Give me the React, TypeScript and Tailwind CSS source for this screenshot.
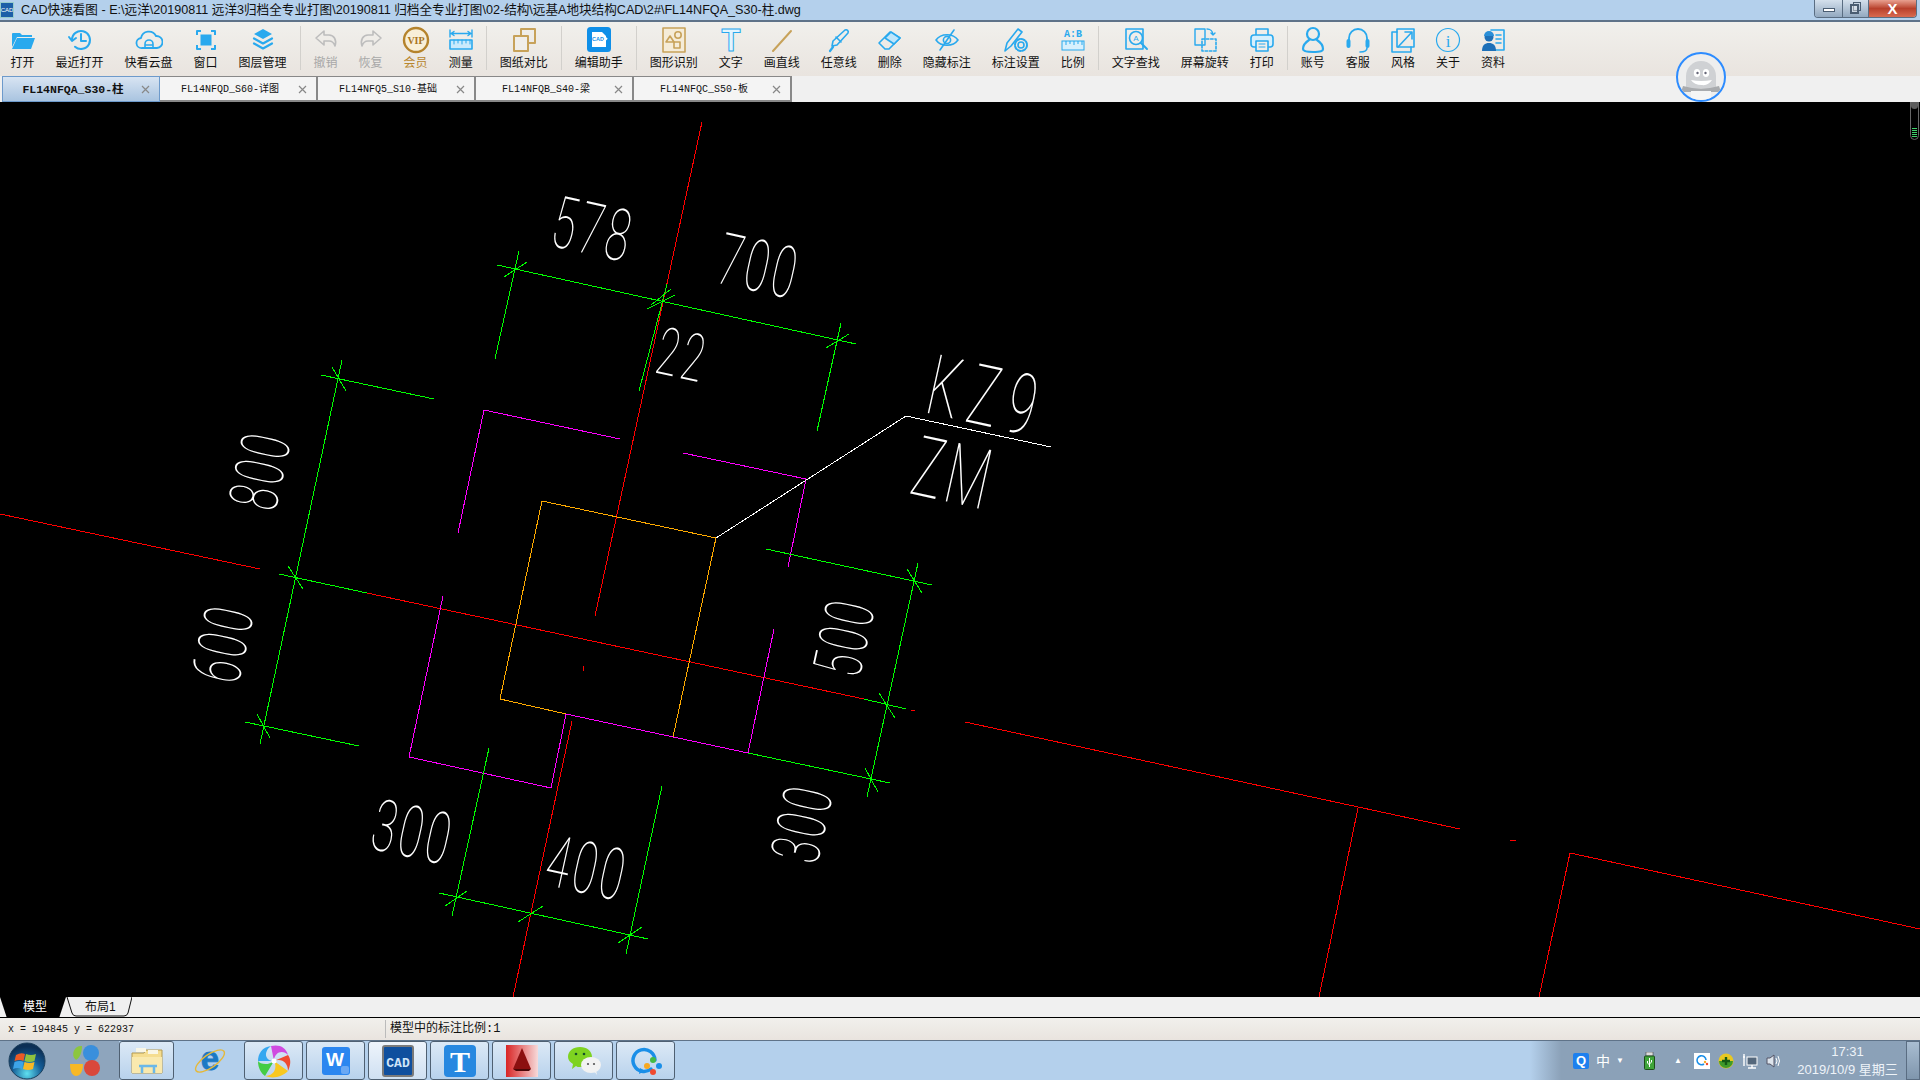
import type { ReactNode } from "react";

const BLUE = "#29a9ee";
const GOLD = "#c7a25a";
const GRAY = "#bdbdbd";

function Ico({ children }: { children: ReactNode }) {
  return (
    <svg width="28" height="28" viewBox="0 0 28 28" fill="none" stroke={BLUE} strokeWidth="1.6" strokeLinejoin="round" strokeLinecap="round">
      {children}
    </svg>
  );
}

const icons: Record<string, ReactNode> = {
  open: (
    <Ico>
      <path d="M3 8a1 1 0 0 1 1-1h7l2 2h10v2H8l-5 10z" fill={BLUE} stroke="none" />
      <path d="M8 12h18l-4 11H3z" fill={BLUE} stroke="none" />
    </Ico>
  ),
  recent: (
    <Ico>
      <path d="M6 14a9 9 0 1 1 3 6.7" strokeWidth="2" />
      <path d="M3 11l3 4 4-3" strokeWidth="2" />
      <path d="M15 8v7h5" strokeWidth="2" />
    </Ico>
  ),
  cloud: (
    <Ico>
      <path d="M7 22a5 5 0 0 1-1-10 8 8 0 0 1 15-2 6 6 0 0 1 1 12z" strokeWidth="1.8" />
      <path d="M10 22v-4a4 4 0 0 1 8 0v4M10 19h8" />
    </Ico>
  ),
  window: (
    <Ico>
      <rect x="8.5" y="8.5" width="11" height="11" fill={BLUE} stroke="none" />
      <path d="M5 9V5h4M19 5h4v4M23 19v4h-4M9 23H5v-4" strokeWidth="2" strokeLinecap="butt" />
    </Ico>
  ),
  layers: (
    <Ico>
      <path d="M14 3l9 5-9 5-9-5z" fill={BLUE} stroke="none" />
      <path d="M5 12.5l9 5 9-5" strokeWidth="2.2" />
      <path d="M5 17.5l9 5 9-5" strokeWidth="2.2" />
    </Ico>
  ),
  undo: (
    <Ico>
      <path d="M12 5L4 12l8 7v-4h5c3 0 5 2 6 5 2-6-1-11-6-11h-5z" stroke={GRAY} />
    </Ico>
  ),
  redo: (
    <Ico>
      <path d="M16 5l8 7-8 7v-4h-5c-3 0-5 2-6 5-2-6 1-11 6-11h5z" stroke={GRAY} />
    </Ico>
  ),
  vip: (
    <svg width="28" height="28" viewBox="0 0 28 28">
      <circle cx="14" cy="14" r="12" fill="#f8efd8" stroke="#b5832c" strokeWidth="2.4" />
      <text x="14" y="17.5" textAnchor="middle" fontSize="10" fontWeight="700" fill="#a87420" className="font-['Liberation_Serif',serif]">
        VIP
      </text>
    </svg>
  ),
  measure: (
    <Ico>
      <path d="M3 4v7M25 4v7M4 7.5h20M7 5.5l-3 2 3 2M21 5.5l3 2-3 2" strokeWidth="1.4" />
      <rect x="3" y="14" width="22" height="9" fill="#c9eafc" />
      <path d="M7 14v4M11 14v3M15 14v4M19 14v3M23 14v4" strokeWidth="1" />
    </Ico>
  ),
  compare: (
    <Ico>
      <rect x="11" y="3" width="14" height="14" stroke={GOLD} strokeWidth="2" />
      <rect x="4" y="10" width="14" height="15" stroke={GOLD} strokeWidth="2" fill="#f0eeea" />
    </Ico>
  ),
  helper: (
    <svg width="28" height="28" viewBox="0 0 28 28">
      <rect x="2" y="1" width="24" height="25" rx="3.5" fill="#0f8fe8" />
      <path d="M7 6h10l4 4v11H7z" fill="#fff" />
      <text x="13" y="15" textAnchor="middle" fontSize="5.5" fontWeight="700" fill="#0f8fe8" className="font-['Liberation_Sans',sans-serif]">
        CAD
      </text>
      <path d="M15 19l7-7" stroke="#fff" strokeWidth="2" />
    </svg>
  ),
  shape: (
    <Ico>
      <rect x="3" y="2" width="22" height="24" fill="#f5ecd8" stroke={GOLD} />
      <path d="M6 16l4-6 4 6z" stroke={GOLD} />
      <circle cx="18" cy="9" r="3.2" stroke={GOLD} />
      <rect x="14" y="16" width="6" height="6" stroke={GOLD} />
    </Ico>
  ),
  text: (
    <svg width="28" height="28" viewBox="0 0 28 28" className="overflow-visible">
      <text x="14" y="25" textAnchor="middle" fontSize="31" fontWeight="700" fill="#e4f5fe" stroke={BLUE} strokeWidth="1" className="font-['Liberation_Sans',sans-serif]">
        T
      </text>
    </svg>
  ),
  line: (
    <Ico>
      <path d="M5 25L23 5" stroke={GOLD} strokeWidth="2" />
    </Ico>
  ),
  pen: (
    <Ico>
      <path d="M7 20l1-5L20 4c2-1 4 1 3 3L12 19z" />
      <path d="M11 11l5 5" fill="none" />
      <path d="M5 25l3-4" strokeWidth="2.2" />
    </Ico>
  ),
  eraser: (
    <Ico>
      <path d="M3 17L14 6l10 6-11 11H9z" />
      <path d="M9 12L15 6l9 6-6 6z" fill="#bfe6fb" />
    </Ico>
  ),
  eye: (
    <Ico>
      <path d="M3 14c5-7 17-7 22 0-5 7-17 7-22 0z" />
      <circle cx="14" cy="14" r="3.6" />
      <path d="M21 4L7 24" />
    </Ico>
  ),
  settings: (
    <Ico>
      <path d="M3 25l2-8L16 3l4 3-11 14z" />
      <circle cx="19" cy="19" r="3" />
      <circle cx="19" cy="19" r="6" strokeDasharray="3 1.7" strokeWidth="2" />
    </Ico>
  ),
  scale: (
    <svg width="28" height="28" viewBox="0 0 28 28">
      <text x="14" y="11" textAnchor="middle" fontSize="10" fontWeight="700" fill={BLUE} className="font-['Liberation_Mono',monospace]">
        A:B
      </text>
      <rect x="3" y="15" width="22" height="9" fill="#d7f0fd" stroke={BLUE} />
      <path d="M7 15v4M11 15v3M15 15v4M19 15v3M23 15v4" stroke={BLUE} />
    </svg>
  ),
  find: (
    <Ico>
      <rect x="4" y="3" width="17" height="20" />
      <circle cx="14" cy="12" r="6.5" fill="#f0eeea" />
      <path d="M19 17l6 6" strokeWidth="2" />
      <text x="14" y="15" textAnchor="middle" fontSize="8" fill={BLUE} stroke="none" className="font-['Liberation_Sans',sans-serif]">
        A
      </text>
    </Ico>
  ),
  rotate: (
    <Ico>
      <rect x="4" y="3" width="10" height="16" strokeWidth="1.4" />
      <rect x="11" y="13" width="14" height="12" strokeDasharray="2.5 1.8" />
      <path d="M16 3c3 0 6 2 6 6M20 7l2 2 2-2" strokeWidth="1.4" />
    </Ico>
  ),
  print: (
    <Ico>
      <path d="M8 9V3h12v6" />
      <rect x="3" y="9" width="22" height="12" rx="3" fill="#d7f0fd" />
      <rect x="8" y="15" width="12" height="10" fill="#f0eeea" />
      <path d="M11 18h6M11 21h6" strokeWidth="1" />
    </Ico>
  ),
  account: (
    <Ico>
      <circle cx="14" cy="8" r="6" strokeWidth="2.2" />
      <path d="M10 14c-3 2-6 5-6 9 0 2 2 3 10 3s10-1 10-3c0-4-3-7-6-9" strokeWidth="2.2" />
    </Ico>
  ),
  service: (
    <Ico>
      <path d="M5 15v-3a9 9 0 0 1 18 0v3" strokeWidth="1.8" />
      <rect x="2.5" y="13" width="4" height="9" rx="2" fill={BLUE} stroke="none" />
      <rect x="21.5" y="13" width="4" height="9" rx="2" fill={BLUE} stroke="none" />
      <path d="M23 22c0 3-3 4-7 4" />
    </Ico>
  ),
  style: (
    <Ico>
      <path d="M8 6H3v20h19v-5" />
      <path d="M8 3h17v18H8z" />
      <path d="M9 21L23 6M16 6h7v7" />
    </Ico>
  ),
  about: (
    <Ico>
      <circle cx="14" cy="14" r="11.5" strokeWidth="1.2" />
      <text x="14" y="21" textAnchor="middle" fontSize="17" fill={BLUE} stroke="none" className="font-['Liberation_Serif',serif]">
        i
      </text>
    </Ico>
  ),
  docs: (
    <Ico>
      <path d="M12 4h13v20H14" strokeWidth="1.6" />
      <path d="M17 9h5M17 13h5M17 17h5" />
      <circle cx="10" cy="11" r="4.5" fill="#1e70b8" stroke="none" />
      <path d="M5 10a5 5 0 0 1 10 0z" fill="#2a8fd8" stroke="none" />
      <path d="M3 25c0-6 3-8 7-8s7 2 7 8z" fill="#1e70b8" stroke="none" />
    </Ico>
  ),
};

type Tool = { icon: string; label: string; tone?: string };

const toolGroups: Tool[][] = [
  [
    { icon: "open", label: "打开" },
    { icon: "recent", label: "最近打开" },
    { icon: "cloud", label: "快看云盘" },
    { icon: "window", label: "窗口" },
    { icon: "layers", label: "图层管理" },
  ],
  [
    { icon: "undo", label: "撤销", tone: "text-[#a8a8a8]" },
    { icon: "redo", label: "恢复", tone: "text-[#a8a8a8]" },
    { icon: "vip", label: "会员", tone: "text-[#b8862e]" },
    { icon: "measure", label: "测量" },
  ],
  [{ icon: "compare", label: "图纸对比" }],
  [{ icon: "helper", label: "编辑助手" }],
  [
    { icon: "shape", label: "图形识别" },
    { icon: "text", label: "文字" },
    { icon: "line", label: "画直线" },
    { icon: "pen", label: "任意线" },
    { icon: "eraser", label: "删除" },
    { icon: "eye", label: "隐藏标注" },
    { icon: "settings", label: "标注设置" },
    { icon: "scale", label: "比例" },
  ],
  [
    { icon: "find", label: "文字查找" },
    { icon: "rotate", label: "屏幕旋转" },
    { icon: "print", label: "打印" },
  ],
  [
    { icon: "account", label: "账号" },
    { icon: "service", label: "客服" },
    { icon: "style", label: "风格" },
    { icon: "about", label: "关于" },
    { icon: "docs", label: "资料" },
  ],
];

const tabs = ["FL14NFQA_S30-柱", "FL14NFQD_S60-详图", "FL14NFQ5_S10-基础", "FL14NFQB_S40-梁", "FL14NFQC_S50-板"];

function TitleBar() {
  return (
    <div className="h-[22px] flex items-start bg-[#b4d0ec] border-b-2 border-[#5f7389]">
      <div className="w-[14px] h-[16px] mt-[2px] bg-[#1d5fa8] border border-[#9cc] flex items-center justify-center overflow-hidden">
        <span className="text-[6px] leading-none text-white">CAD</span>
      </div>
      <span className="ml-[7px] text-[12.6px] leading-[20px] text-[#111] whitespace-nowrap">
        CAD快速看图 - E:\远洋\20190811 远洋3归档全专业打图\20190811 归档全专业打图\02-结构\远基A地块结构CAD\2#\FL14NFQA_S30-柱.dwg
      </span>
      <div className="ml-auto mr-[3px] flex h-[18px] rounded-b-[4px] border border-t-0 border-[#5a6d82] overflow-hidden">
        <div className="w-[28px] bg-gradient-to-b from-[#d4e0ec] to-[#93a9c0] border-r border-[#5a6d82] flex items-center justify-center">
          <div className="w-[12px] h-[4px] mt-[3px] bg-white border border-[#4a5d72]" />
        </div>
        <div className="w-[26px] bg-gradient-to-b from-[#d4e0ec] to-[#93a9c0] border-r border-[#5a6d82] flex items-center justify-center relative">
          <div className="absolute left-[10px] top-[2px] w-[8px] h-[9px] border border-[#4a5d72]" />
          <div className="absolute left-[7px] top-[4px] w-[9px] h-[10px] border-2 border-[#4a5d72] bg-white/40" />
        </div>
        <div className="w-[47px] bg-gradient-to-b from-[#e8a090] via-[#b8402c] to-[#d86a50] flex items-center justify-center">
          <span className="text-[15px] leading-none font-bold text-white font-['Liberation_Sans',sans-serif]">X</span>
        </div>
      </div>
    </div>
  );
}

function Toolbar() {
  return (
    <div className="h-[54px] flex bg-gradient-to-b from-[#f1f0ec] to-[#e9e4df]">
      {toolGroups.map((group, i) => (
        <div key={i} className="flex">
          {i > 0 && <div className="w-px h-[44px] mt-[4px] ml-[3px] mr-[2px] bg-[#d2d0cc]" />}
          {group.map((t) => (
            <div key={t.label} className="flex flex-col items-center px-[10.5px] pt-[4px]">
              {/* icons are a bit wider than two-character labels, the label sets the column width */}
              <div className="w-0 h-[28px] flex items-center justify-center [&>svg]:shrink-0">{icons[t.icon]}</div>
              <span className={`mt-[1px] text-[12px] leading-[16px] whitespace-nowrap ${t.tone ?? "text-[#111]"}`}>{t.label}</span>
            </div>
          ))}
        </div>
      ))}
    </div>
  );
}

function TabBar() {
  return (
    <div className="h-[26px] flex pl-[2px] bg-[#f0f0f0]">
      {tabs.map((name, i) => (
        <div
          key={name}
          className={`w-[158px] h-[26px] pt-[1px] flex items-center justify-center pr-[16px] relative font-['Liberation_Mono','Noto_Sans_CJK_SC',monospace] text-[#111] ${
            i === 0
              ? "text-[11.5px] font-bold bg-gradient-to-b from-[#d8e4f2] to-[#a9c4e0] border border-[#6d9acb]"
              : "text-[10px] bg-[#f4f4f4] border-r-2 border-b-2 border-t border-[#888]"
          }`}
        >
          {name}
          <svg className="absolute right-[9px] top-[8px]" width="9" height="9" viewBox="0 0 9 9" stroke="#888" strokeWidth="1.2">
            <path d="M1 1l7 7M8 1l-7 7" />
          </svg>
        </div>
      ))}
    </div>
  );
}

type Seg = [number, number, number, number];

const greenSegs: Seg[] = [
  [497, 265, 856, 344],
  [519, 251, 495, 359],
  [667, 284, 639, 391],
  [841, 323, 817, 431],
  [527, 262, 504, 277],
  [675, 295, 647, 309],
  [671, 289, 651, 305],
  [849, 334, 826, 348],
  [342, 360, 260, 744],
  [321, 375, 434, 399],
  [245, 722, 359, 746],
  [332, 367, 346, 391],
  [288, 566, 303, 589],
  [257, 714, 270, 738],
  [279, 574, 367, 593],
  [864, 699, 906, 709],
  [766, 549, 932, 585],
  [918, 563, 867, 797],
  [907, 569, 922, 593],
  [879, 693, 895, 718],
  [865, 768, 878, 792],
  [748, 753, 890, 783],
  [439, 893, 648, 939],
  [489, 748, 452, 916],
  [662, 786, 626, 954],
  [467, 891, 445, 906],
  [543, 906, 518, 922],
  [642, 927, 618, 943],
];

const redSegs: Seg[] = [
  [702, 122, 595, 616],
  [572, 721, 513, 997],
  [584, 666, 583, 671],
  [0, 514, 260, 569],
  [367, 593, 864, 699],
  [911, 710, 915, 711],
  [965, 722, 1460, 829],
  [1510, 840, 1516, 841],
  [1570, 853, 1920, 929],
  [1358, 808, 1319, 997],
  [1570, 853, 1539, 997],
];

const magentaSegs: Seg[] = [
  [484, 410, 620, 439],
  [484, 410, 458, 533],
  [683, 453, 806, 479],
  [806, 479, 788, 567],
  [443, 596, 409, 757],
  [409, 757, 551, 788],
  [551, 788, 566, 714],
  [566, 714, 748, 753],
  [748, 753, 774, 629],
];

const orangeSegs: Seg[] = [
  [542, 501, 716, 538],
  [716, 538, 673, 737],
  [542, 501, 500, 699],
  [500, 699, 566, 714],
];

const whiteSegs: Seg[] = [
  [716, 538, 906, 416],
  [906, 416, 1051, 447],
];

const cadLabels: { t: string; x: number; y: number; r: number; size: number; ls?: number }[] = [
  { t: "578", x: 548, y: 245, r: 12.4, size: 72 },
  { t: "700", x: 714, y: 282, r: 12.4, size: 72 },
  { t: "22", x: 653, y: 372, r: 12.4, size: 66 },
  { t: "KZ9", x: 923, y: 412, r: 12.4, size: 84, ls: 16 },
  { t: "ZM", x: 908, y: 493, r: 12.4, size: 84 },
  { t: "800", x: 275, y: 513, r: -77.6, size: 68 },
  { t: "600", x: 238, y: 686, r: -77.6, size: 68 },
  { t: "500", x: 859, y: 680, r: -77.6, size: 68 },
  { t: "300", x: 817, y: 866, r: -77.6, size: 68 },
  { t: "300", x: 368, y: 848, r: 12.4, size: 72 },
  { t: "400", x: 542, y: 884, r: 12.4, size: 72 },
];

function Segs({ items, color }: { items: Seg[]; color: string }) {
  return (
    <g stroke={color} strokeWidth="1">
      {items.map(([x1, y1, x2, y2], i) => (
        <line key={i} x1={x1} y1={y1} x2={x2} y2={y2} />
      ))}
    </g>
  );
}

function Drawing() {
  return (
    <div className="h-[895px] bg-black relative overflow-hidden">
      <svg width="1920" height="895" viewBox="0 102 1920 895" shapeRendering="crispEdges" className="block">
        <Segs items={redSegs} color="#ff0000" />
        <Segs items={orangeSegs} color="#ffaa00" />
        <Segs items={magentaSegs} color="#ff00ff" />
        <Segs items={greenSegs} color="#00ff00" />
        <Segs items={whiteSegs} color="#ffffff" />
        <g fill="#fff" className="font-['Roboto',sans-serif] font-thin">
          {cadLabels.map((l, i) => (
            <text key={i} fontSize={l.size} letterSpacing={l.ls ?? 6} transform={`translate(${l.x} ${l.y}) rotate(${l.r}) scale(0.6 1)`}>
              {l.t}
            </text>
          ))}
        </g>
      </svg>
      <div className="absolute right-[1px] top-[-19px] w-[9px] h-[57px] rounded-full border border-[#666] bg-black flex flex-col justify-end items-center">
        <div className="absolute top-0 left-0 w-full h-[25px] rounded-full bg-[#5c5c5c]" />
        <div className="w-[5px] h-[9px] mb-[2px] bg-[repeating-linear-gradient(#3dd26a_0,#3dd26a_1px,#000_1px,#000_2px)]" />
      </div>
    </div>
  );
}

function ModelTabs() {
  return (
    <div className="h-[21px] flex bg-[#f0f0f0] border-b border-black text-[12px] leading-[20px]">
      <div className="w-[66px] h-[20px] pl-[23px] bg-black text-white [clip-path:polygon(0_0,100%_0,90%_100%,10%_100%)]">模型</div>
      <div className="w-[66px] h-[20px] pl-[19px] relative text-[#111]">
        布局1
        <svg className="absolute inset-0" width="66" height="20" viewBox="0 0 66 20" fill="none" stroke="#111">
          <path d="M1 0l5 16q1 3 4 3h48q3 0 4-3l4-16" />
        </svg>
      </div>
    </div>
  );
}

function StatusBar() {
  return (
    <div className="h-[22px] flex items-center bg-gradient-to-b from-[#f1f0ec] to-[#e9e4df]">
      <div className="w-[385px] pl-[8px] text-[10px] text-[#111] font-['Liberation_Mono',monospace] whitespace-nowrap">x = 194845 y = 622937</div>
      <div className="w-px h-[18px] bg-[#bbb]" />
      <div className="pl-[4px] text-[12px] text-[#111] font-['Liberation_Mono','Noto_Sans_CJK_SC',monospace]">模型中的标注比例:1</div>
    </div>
  );
}

function Orb() {
  return (
    <svg width="38" height="38" viewBox="0 0 38 38">
      <defs>
        <radialGradient id="orb" cx="50%" cy="85%" r="75%">
          <stop offset="0" stopColor="#5fe0f0" />
          <stop offset="0.55" stopColor="#145c96" />
          <stop offset="1" stopColor="#0c2f55" />
        </radialGradient>
      </defs>
      <circle cx="19" cy="19" r="18" fill="url(#orb)" stroke="#1c3f5c" />
      <path d="M8 13q5-3 9-1l-1.500 7q-4-2-9 0z" fill="#ea5a26" />
      <path d="M18 12q5 2 10 0l-1.500 7q-5 2-10 0z" fill="#8fc23e" />
      <path d="M6.500 20q5-2 9 0l-1.500 7q-4-2-9 0z" fill="#3da4e8" />
      <path d="M16.500 20q5 2 10 0l-1.500 7q-5 2-10 0z" fill="#f8b825" />
    </svg>
  );
}

const taskIcons: ReactNode[] = [
  <svg key="folder" width="34" height="32" viewBox="0 0 34 32">
    <path d="M2 8h12l2-3h16v23H2z" fill="#f5dd90" stroke="#b49a50" />
    <rect x="6" y="3" width="10" height="4" fill="#f9f6e6" />
    <rect x="18" y="5" width="10" height="4" fill="#f9f6e6" />
    <path d="M2 12h30v16H2z" fill="#f9e9ae" />
    <path d="M12 28v-7h12v7M9 21h18" fill="none" stroke="#6ab8e8" strokeWidth="2.5" />
  </svg>,
  <svg key="ie" width="34" height="32" viewBox="0 0 34 32" className="overflow-visible">
    <text x="17" y="25" textAnchor="middle" fontSize="33" fontWeight="700" fill="#1b78c4" stroke="#1b78c4" strokeWidth="0.8" className="font-['Liberation_Sans',sans-serif]">
      e
    </text>
    <ellipse cx="17" cy="16" rx="17" ry="6.500" fill="none" stroke="#e5b83a" strokeWidth="1.400" transform="rotate(-35 17 16)" />
  </svg>,
  <svg key="spin" width="34" height="34" viewBox="0 0 34 34">
    <path d="M17 17C8 17 6 8 14 2c-9 1-13 8-13 15z" fill="#35a7f0" />
    <path d="M17 17C17 8 26 5 31 11 29 3 22 0 14 2z" fill="#d04ae0" />
    <path d="M17 17c8-3 14 2 14 10 3-7 3-12 0-16z" fill="#f04a30" />
    <path d="M17 17c4 8-1 15-9 15 8 3 17 1 23-5z" fill="#f8c820" />
    <path d="M17 17c-6 5-14 3-16 0 0 7 3 12 7 15z" fill="#44cc44" />
    <circle cx="17" cy="17" r="2.500" fill="#fff" />
  </svg>,
  <svg key="wps" width="30" height="30" viewBox="0 0 30 30">
    <rect x="1" y="1" width="28" height="28" rx="3" fill="#2b86f0" />
    <text x="14" y="20" textAnchor="middle" fontSize="19" fontWeight="700" fill="#fff" className="font-['Liberation_Sans',sans-serif]">
      W
    </text>
    <rect x="20" y="20" width="8" height="8" rx="2" fill="#6aa8f4" />
  </svg>,
  <svg key="cad" width="32" height="32" viewBox="0 0 32 32">
    <rect x="1" y="1" width="30" height="30" rx="2" fill="#0f4f9e" stroke="#7a7a7a" strokeWidth="2" />
    <text x="16" y="22" textAnchor="middle" fontSize="13" fontWeight="700" fill="#cfe4f8" className="font-['Liberation_Mono',monospace]">
      CAD
    </text>
  </svg>,
  <svg key="t" width="32" height="32" viewBox="0 0 32 32" className="overflow-visible">
    <rect x="0" y="0" width="32" height="32" rx="4" fill="#2788e0" />
    <text x="16" y="27" textAnchor="middle" fontSize="30" fontWeight="700" fill="#fff" className="font-['Liberation_Serif',serif]">
      T
    </text>
  </svg>,
  <svg key="acad" width="32" height="32" viewBox="0 0 32 32">
    <defs>
      <linearGradient id="acad" x1="0" y1="0" x2="1" y2="0">
        <stop offset="0" stopColor="#d92525" />
        <stop offset="1" stopColor="#f7dada" />
      </linearGradient>
    </defs>
    <rect width="32" height="32" fill="url(#acad)" />
    <path d="M16 3l9 21H7z" fill="#8c1010" />
    <path d="M7 24h18l-2 2H10z" fill="#4a0808" />
  </svg>,
  <svg key="wechat" width="34" height="30" viewBox="0 0 34 30">
    <path d="M13 1c7 0 12 4 12 10s-5 10-12 10c-2 0-3 0-4-1l-4 3 1-5c-3-2-5-4-5-7C1 5 6 1 13 1z" fill="#7ed321" />
    <circle cx="9" cy="8" r="1.300" fill="#14502a" />
    <circle cx="17" cy="8" r="1.300" fill="#14502a" />
    <ellipse cx="24" cy="19" rx="10" ry="8" fill="#f2f2f2" />
    <path d="M27 25l3 4-1-5z" fill="#f2f2f2" />
    <circle cx="21" cy="18" r="1.100" fill="#555" />
    <circle cx="27" cy="18" r="1.100" fill="#555" />
  </svg>,
  <svg key="qq" width="34" height="32" viewBox="0 0 34 32">
    <path d="M22 24a11 11 0 1 1 4-9" fill="none" stroke="#1a8fe8" strokeWidth="3.500" strokeLinecap="round" />
    <path d="M11 23l-1 6 6-3z" fill="#1a8fe8" />
    <circle cx="24" cy="15" r="3" fill="#44bb44" />
    <circle cx="30" cy="21" r="3" fill="#1a8fe8" />
    <circle cx="24" cy="27" r="3" fill="#f04a30" />
    <circle cx="18" cy="21" r="3" fill="#f8a820" />
  </svg>,
];

function Tray() {
  return (
    <div className="w-[390px] h-full flex items-center bg-gradient-to-r from-[#b4d0ec] from-[0%] to-[#8ba1b8] to-[8%] text-white">
      <div className="ml-[43px] w-[16px] h-[16px] rounded-[2px] bg-[#1e80ee] flex items-center justify-center text-[13px] leading-none font-bold font-['Liberation_Sans',sans-serif]">Q</div>
      <span className="ml-[7px] w-[14px] text-[14px] leading-none">中</span>
      <span className="ml-[6px] w-[8px] text-[8px] leading-none">▼</span>
      <svg className="ml-[20px]" width="11" height="18" viewBox="0 0 11 18">
        <rect x="2" y="0" width="7" height="4" fill="#ddd" stroke="#333" strokeWidth="0.5" />
        <rect x="0.500" y="4" width="10" height="13.500" rx="1" fill="#3fa53a" stroke="#1d4d1a" />
        <path d="M5.500 6v9M3.500 9v2l2 2M7.500 8v2l-2 2" stroke="#fff" fill="none" />
      </svg>
      <span className="ml-[19px] w-[10px] text-[8px] leading-none">▲</span>
      <svg className="ml-[10px]" width="16" height="16" viewBox="0 0 16 16">
        <rect width="16" height="16" fill="#fff" />
        <path d="M10 11a4.500 4.500 0 1 1 2-4" fill="none" stroke="#1a8fe8" strokeWidth="1.600" />
        <circle cx="11" cy="9" r="1.200" fill="#f8a820" />
        <circle cx="13" cy="11" r="1.200" fill="#f04a30" />
      </svg>
      <svg className="ml-[8px]" width="16" height="16" viewBox="0 0 16 16">
        <circle cx="8" cy="8" r="7.500" fill="#e8c820" />
        <path d="M1 8a7 7 0 0 0 14 0" fill="#3f9a2a" />
        <path d="M8 4v8M4 8h8" stroke="#145a14" strokeWidth="2.400" />
      </svg>
      <svg className="ml-[8px]" width="16" height="16" viewBox="0 0 16 16" fill="none" stroke="#fff">
        <rect x="5" y="4" width="10" height="8" fill="#55687c" />
        <path d="M10 12v3M6 15h8M2 1v12M1 4h2" strokeWidth="1.400" />
      </svg>
      <svg className="ml-[8px]" width="15" height="16" viewBox="0 0 15 16" fill="none" stroke="#fff">
        <path d="M1 5h3l4-3v12l-4-3H1z" fill="#dde4ec" stroke="#556" />
        <path d="M10 5q2 3 0 6M12 3q3 5 0 10" />
      </svg>
      <div className="ml-[17px] w-[99px] flex flex-col items-center text-[13px] leading-[18px] text-[#eef3f8] font-['Liberation_Sans','Noto_Sans_CJK_SC',sans-serif] whitespace-nowrap">
        <span>17:31</span>
        <span>2019/10/9 星期三</span>
      </div>
      <div className="ml-[9px] w-[14px] h-full bg-gradient-to-b from-[#a9bdd1] to-[#7f96ad] border border-[#5a6d82]" />
    </div>
  );
}

function TaskBar() {
  return (
    <div className="h-[40px] flex bg-[#b4d0ec] border-t border-[#5f7389]">
      <div className="w-[119px] h-full flex items-center bg-[#8ea5bd]">
        <div className="ml-[8px]">
          <Orb />
        </div>
        <svg className="ml-[22px]" width="32" height="34" viewBox="0 0 32 34">
          <path d="M14 2a8 8 0 0 0-6 14c4-2 6-8 6-14z" fill="#8cc63f" />
          <circle cx="23" cy="9" r="8" fill="#3a8fdc" />
          <path d="M2 20h13c0 8-3 12-7 12s-6-5-6-12z" fill="#f8b825" />
          <circle cx="24" cy="24" r="8" fill="#d9483b" />
        </svg>
      </div>
      <div className="flex gap-[3px] h-full">
        {taskIcons.map((ico, i) => (
          <div
            key={i}
            className={`flex items-center justify-center rounded-[3px] ${i === 0 ? "w-[55px] mr-[2px]" : i === 1 ? "w-[62px]" : "w-[59px]"} ${
              i === 1
                ? ""
                : i === 4
                  ? "border border-[#4f6072] bg-gradient-to-b from-[#eef4fb] to-[#cfe0f2]"
                  : "border border-[#4f6072] bg-gradient-to-b from-[#dce9f6] to-[#b8d2ec]"
            }`}
          >
            {ico}
          </div>
        ))}
      </div>
      <div className="flex-1" />
      <Tray />
    </div>
  );
}

export default function App() {
  return (
    <div className="w-[1920px] h-[1080px] overflow-hidden relative bg-[#f0f0f0] font-['Liberation_Sans','Noto_Sans_CJK_SC',sans-serif]">
      <TitleBar />
      <Toolbar />
      <TabBar />
      <Drawing />
      <ModelTabs />
      <StatusBar />
      <TaskBar />
      {/* floating assistant */}
      <div className="absolute left-[1676px] top-[52px] w-[50px] h-[50px] rounded-full border-2 border-[#2d8cff] bg-[#eeeeee] overflow-hidden">
        <svg width="46" height="46" viewBox="0 0 46 46">
          <path d="M8 34V22a15 15 0 0 1 30 0v12z" fill="#cfd1d4" />
          <path d="M5 32q18 5 36 0l2 6H3z" fill="#a9abae" />
          <rect x="13" y="37" width="20" height="9" fill="#f5f5f5" />
          <ellipse cx="19" cy="19" rx="3.200" ry="4" fill="#fff" />
          <ellipse cx="28" cy="19" rx="3.200" ry="4" fill="#fff" />
          <circle cx="19.500" cy="19" r="1.200" fill="#667" />
          <circle cx="27.500" cy="19" r="1.200" fill="#667" />
          <path d="M13 26q10 2 21 0-4 6-10 5-8 0-11-5z" fill="#fff" />
        </svg>
      </div>
    </div>
  );
}
